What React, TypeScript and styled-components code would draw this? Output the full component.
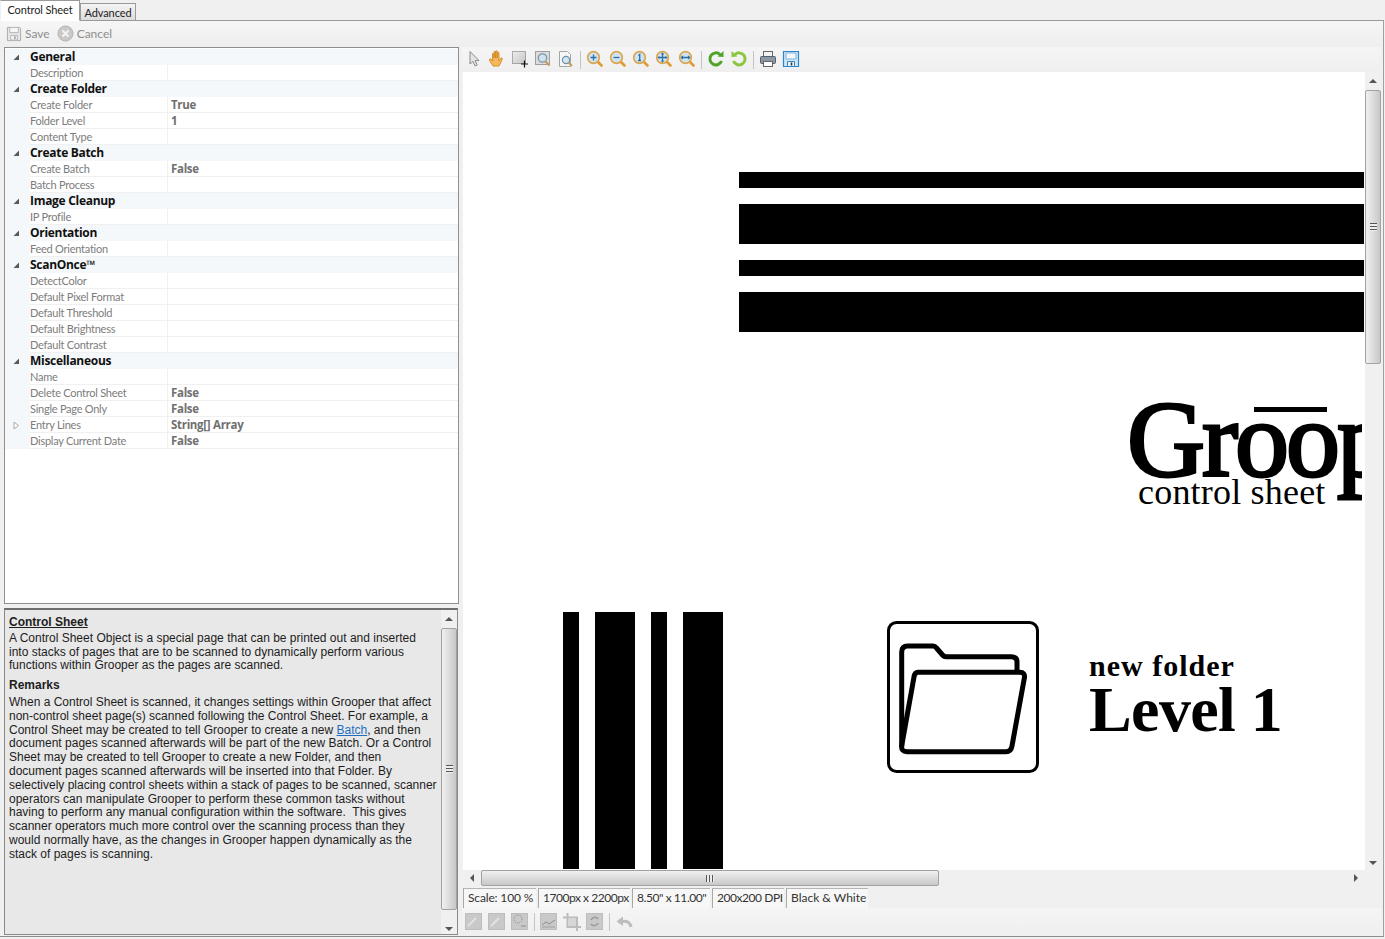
import React from "react";
import styled, { createGlobalStyle } from "styled-components";

const GlobalStyle = createGlobalStyle`
  html, body {
    margin: 0;
    padding: 0;
    background: #f0f0f0;
    overflow: hidden;
  }
  * {
    box-sizing: border-box;
  }
`;

const uiFont = `Lato, "Open Sans", "Liberation Sans", sans-serif`;
const boldFont = `"Open Sans", "Noto Sans", "Liberation Sans", sans-serif`;
const serif = `"Liberation Serif", "Times New Roman", serif`;

const Window = styled.div`
  width: 1385px;
  height: 939px;
  background: #f0f0f0;
  font-family: ${uiFont};
  font-size: 12px;
  display: flex;
  flex-direction: column;
`;

const TabStrip = styled.div`
  height: 21px;
  display: flex;
  align-items: flex-end;
  position: relative;
  z-index: 1;
  margin-bottom: -1px;
`;

const Tab = styled.div<{ $active?: boolean }>`
  height: ${(p) => (p.$active ? 21 : 18)}px;
  width: ${(p) => (p.$active ? 80 : 56)}px;
  border: 1px solid #9a9a9a;
  border-left-color: ${(p) => (p.$active ? "#f0f0f0" : "#9a9a9a")};
  border-bottom-color: ${(p) => (p.$active ? "#ffffff" : "#9a9a9a")};
  background: ${(p) =>
    p.$active ? "#ffffff" : "linear-gradient(#f4f4f4, #dcdcdc)"};
  color: #222;
  display: flex;
  align-items: center;
  justify-content: center;
  font-size: 11px;
  letter-spacing: -0.1px;
  padding-bottom: ${(p) => (p.$active ? 2 : 0)}px;
`;

const TabPanel = styled.div`
  height: 917px;
  width: 1384px;
  border-top: 1px solid #9a9a9a;
  border-right: 1px solid #a0a0a0;
  border-bottom: 1px solid #8c8c8c;
  display: flex;
  flex-direction: column;
`;

const ActionBar = styled.div`
  height: 26px;
  display: flex;
  align-items: center;
  gap: 7px;
  padding: 0 0 1px 6px;
  background: linear-gradient(#f6f6f6, #eeeeee);
  color: #8d8d8d;
  font-size: 12px;
`;

const ActionItem = styled.span`
  display: flex;
  align-items: center;
  gap: 3px;
`;

const Split = styled.div`
  flex: 1;
  display: flex;
  gap: 4px;
  padding-left: 4px;
  min-height: 0;
`;

const LeftColumn = styled.div`
  width: 455px;
  display: flex;
  flex-direction: column;
  gap: 4px;
`;

const PropertyGrid = styled.div`
  height: 557px;
  background: #ffffff;
  border: 1px solid #8f8f8f;
  padding-top: 1px;
`;

const GridRow = styled.div<{ $category?: boolean }>`
  height: 16px;
  display: grid;
  grid-template-columns: 25px 138px 1fr;
  grid-template-rows: 16px;
  background: ${(p) => (p.$category ? "#f5f8fa" : "#ffffff")};
  line-height: 15px;
  white-space: nowrap;
`;

const Gutter = styled.div`
  background: #f5f8fa;
  display: flex;
  align-items: center;
  justify-content: center;
  padding-right: 3px;
`;

const CategoryName = styled.div`
  grid-column: 2 / 4;
  font-family: ${boldFont};
  font-weight: 700;
  font-size: 12px;
  letter-spacing: -0.3px;
  color: #111;
`;

const PropName = styled.div`
  color: #7c7c7c;
  font-size: 11px;
  letter-spacing: -0.25px;
  padding-top: 1px;
  line-height: 14px;
  border-bottom: 1px solid #f0f0f0;
  border-right: 1px solid #f0f0f0;
`;

const PropValue = styled.div`
  font-family: ${boldFont};
  font-size: 11.5px;
  letter-spacing: -0.3px;
  color: #6f6f6f;
  font-weight: 700;
  padding-left: 3px;
  border-bottom: 1px solid #f0f0f0;
`;

const HelpPanel = styled.div`
  height: 327px;
  width: 454px;
  background: #e8e8e8;
  border: 1px solid #8a8a8a;
  border-top: 2px solid #6e6e6e;
  display: flex;
  font-family: "Liberation Sans", Arial, sans-serif;
  font-size: 12px;
  line-height: 13.8px;
  color: #1d1d1d;
`;

const HelpBody = styled.div`
  flex: 1;
  padding: 6px 0 0 4px;
  min-width: 0;
`;

const HelpTitle = styled.div`
  font-weight: 700;
  text-decoration: underline;
  margin-bottom: 2px;
`;

const HelpHeading = styled.div`
  font-weight: 700;
  margin: 6px 0 3px;
`;

const HelpText = styled.div`
  white-space: pre-wrap;
`;

const HelpLink = styled.span`
  color: #1f6fc0;
  text-decoration: underline;
`;

const RightColumn = styled.div`
  width: 918px;
  display: flex;
  flex-direction: column;
`;

const ToolRow = styled.div<{ $height: number; $top?: number }>`
  height: ${(p) => p.$height}px;
  display: flex;
  align-items: ${(p) => (p.$top ? "flex-start" : "center")};
  padding-top: ${(p) => p.$top || 0}px;
  margin-left: -1px;
  background: linear-gradient(#f5f5f5, #efefef);
`;

const ToolButton = styled.div`
  width: 23px;
  height: 22px;
  display: flex;
  align-items: center;
  justify-content: center;
`;

const ToolSeparator = styled.div`
  width: 6px;
  height: 18px;
  align-self: center;
  display: flex;
  justify-content: center;
  &::before {
    content: "";
    width: 1px;
    background: #c4c4c4;
  }
`;

const ViewerBody = styled.div`
  height: 798px;
  display: flex;
`;

const Canvas = styled.div`
  flex: 1;
  position: relative;
  background: #ffffff;
  overflow: hidden;
`;

const HorizontalBars = styled.div`
  position: absolute;
  left: 276px;
  top: 100px;
  width: 625px;
  display: flex;
  flex-direction: column;
  gap: 16px;
`;

const HBar = styled.div<{ $size: number }>`
  height: ${(p) => p.$size}px;
  background: #000;
`;

const VerticalBars = styled.div`
  position: absolute;
  left: 100px;
  top: 540px;
  height: 257px;
  display: flex;
  gap: 16px;
`;

const VBar = styled.div<{ $size: number }>`
  width: ${(p) => p.$size}px;
  background: #000;
`;

const Logo = styled.div`
  position: absolute;
  left: 661px;
  top: 310px;
  width: 238px;
  height: 130px;
  overflow: hidden;
  font-family: ${serif};
  color: #000;
`;

const LogoWord = styled.div`
  font-size: 108px;
  font-weight: 400;
  -webkit-text-stroke: 3px #000;
  line-height: 120px;
  letter-spacing: -3px;
  white-space: nowrap;
  position: absolute;
  left: 3px;
  top: -2px;
`;

const Macron = styled.span`
  position: relative;
  &::before {
    content: "";
    position: absolute;
    left: 19px;
    right: 10px;
    top: 27px;
    height: 5px;
    background: #000;
  }
`;

const LogoCaption = styled.div`
  position: absolute;
  left: 14px;
  top: 92px;
  font-size: 36px;
  line-height: 36px;
  letter-spacing: 0.2px;
  white-space: nowrap;
`;

const FolderMark = styled.svg`
  position: absolute;
  left: 424px;
  top: 549px;
  width: 152px;
  height: 152px;
`;

const LevelLabel = styled.div`
  position: absolute;
  left: 626px;
  top: 578px;
  font-family: ${serif};
  font-weight: 700;
  color: #000;
  white-space: nowrap;
`;

const LevelSmall = styled.div`
  font-size: 30px;
  line-height: 31px;
  letter-spacing: 1px;
`;

const LevelBig = styled.div`
  font-size: 64px;
  line-height: 58px;
  letter-spacing: -0.6px;
`;

const ScrollTrack = styled.div<{ $horizontal?: boolean }>`
  background: #f0f0f0;
  display: flex;
  flex-direction: ${(p) => (p.$horizontal ? "row" : "column")};
  align-items: center;
  flex: none;
  ${(p) => (p.$horizontal ? "height: 16px;" : "width: 16px;")}
`;

const ScrollThumb = styled.div<{ $horizontal?: boolean; $length: number }>`
  flex: none;
  display: flex;
  align-items: center;
  justify-content: center;
  border: 1px solid #a2a2a2;
  border-radius: 2px;
  ${(p) =>
    p.$horizontal
      ? `height: 16px; width: ${p.$length}px; background: linear-gradient(#f0f0f0, #dedede 45%, #c8c8c8);`
      : `width: 16px; height: ${p.$length}px; background: linear-gradient(90deg, #f0f0f0, #dedede 45%, #c8c8c8);`}
`;

const ScrollGrip = styled.div<{ $horizontal?: boolean }>`
  ${(p) =>
    p.$horizontal
      ? `width: 8px; height: 7px; background: repeating-linear-gradient(90deg, #555 0 1px, #eee 1px 3px);`
      : `height: 8px; width: 7px; background: repeating-linear-gradient(#555 0 1px, #eee 1px 3px);`}
`;

const ScrollArrow = styled.div<{ $dir: "up" | "down" | "left" | "right"; $offset: number }>`
  width: 0;
  height: 0;
  flex: none;
  border: 4px solid transparent;
  ${(p) =>
    ({
      up: "border-top: 0; border-bottom-color: #555;",
      down: "border-bottom: 0; border-top-color: #555;",
      left: "border-left: 0; border-right-color: #555;",
      right: "border-right: 0; border-left-color: #555;",
    })[p.$dir]}
  margin: ${(p) =>
    p.$dir === "up" || p.$dir === "down"
      ? `${p.$offset}px 0`
      : `0 ${p.$offset}px`};
`;

const ScrollSpacer = styled.div`
  flex: 1;
`;

const StatusBar = styled.div`
  height: 20px;
  margin-top: 2px;
  display: flex;
  gap: 2px;
  font-size: 12px;
  color: #333;
`;

const StatusCell = styled.div<{ $width: number; $squeeze: number }>`
  width: ${(p) => p.$width}px;
  letter-spacing: ${(p) => p.$squeeze}px;
  border-top: 1px solid #b5b5b5;
  border-left: 1px solid #a8a8a8;
  background: #f7f7f7;
  padding-left: 4px;
  line-height: 18px;
  white-space: nowrap;
`;

const ArrowGlyph = styled.svg`
  display: block;
`;

const Tri = ({ open }: { open: boolean }) =>
  open ? (
    <ArrowGlyph width="8" height="8" viewBox="0 0 8 8">
      <path d="M7 1.5V7H1.5z" fill="#5a5a5a" />
    </ArrowGlyph>
  ) : (
    <ArrowGlyph width="8" height="9" viewBox="0 0 8 9">
      <path d="M2 1l4.5 3.5L2 8z" fill="#fff" stroke="#a8a8a8" />
    </ArrowGlyph>
  );

const SaveIcon = () => (
  <svg width="16" height="16" viewBox="0 0 17 17">
    <path d="M1.5 1.5h13l1 1v13h-14z" fill="#e6e6e6" stroke="#a9a9a9" />
    <path d="M4 2v5h9V2" fill="#f6f6f6" stroke="#b5b5b5" />
    <path d="M5 10h7v5H5z" fill="#f2f2f2" stroke="#b5b5b5" />
    <path d="M9.5 11v3" stroke="#999" strokeWidth="1.5" />
  </svg>
);

const CancelIcon = () => (
  <svg width="17" height="17" viewBox="0 0 17 17">
    <circle cx="8.5" cy="8.5" r="7.5" fill="#c9c9c9" stroke="#b3b3b3" />
    <path d="M5.5 5.5l6 6M11.5 5.5l-6 6" stroke="#f4f4f4" strokeWidth="2" />
  </svg>
);

const CursorIcon = () => (
  <svg width="18" height="18" viewBox="0 0 18 18">
    <path d="M5 1.5v12.5l3-2.6 2 4.6 2.2-1-2-4.4H14z" fill="#e4e4e4" stroke="#8b8b8b" />
  </svg>
);

const HandIcon = () => (
  <svg width="18" height="18" viewBox="0 0 18 18">
    <path
      d="M5 16c-1-2-3-4-3.500-6-.3-1.200 1-1.500 1.700-.7L4.500 11V4c0-1 1.500-1 1.500 0v4-6c0-1 1.700-1 1.700 0v6-6.500c0-1 1.700-1 1.700 0V8V3c0-1 1.600-1 1.600 0v8c.7-1 1.200-2.500 2-3 .8-.4 1.500.3 1.200 1-1 2-1.700 5-3.200 7z"
      fill="#f5b65c"
      stroke="#d08a25"
      strokeWidth="0.9"
    />
  </svg>
);

const SelectIcon = () => (
  <svg width="18" height="18" viewBox="0 0 18 18">
    <defs>
      <linearGradient id="selectFill" x1="0" y1="0" x2="1" y2="1">
        <stop offset="0" stopColor="#eeeeee" />
        <stop offset="1" stopColor="#c4c4c4" />
      </linearGradient>
    </defs>
    <rect x="1.500" y="1.500" width="13" height="12" fill="url(#selectFill)" stroke="#666" strokeDasharray="1 1" />
    <path d="M13.500 10.500v7M10 14h7" stroke="#111" strokeWidth="1.200" />
  </svg>
);

const ZoomSelectIcon = () => (
  <svg width="18" height="18" viewBox="0 0 18 18">
    <rect x="1.500" y="1.500" width="14" height="13" fill="#dcdcdc" stroke="#555" strokeDasharray="1 1" />
    <circle cx="8.500" cy="8" r="4.200" fill="#cfe2ee" stroke="#7b97aa" strokeWidth="1.300" />
    <path d="M11.500 11.500l4 4" stroke="#c99a56" strokeWidth="2" />
  </svg>
);

const PageZoomIcon = () => (
  <svg width="18" height="18" viewBox="0 0 18 18">
    <path d="M2.500 1.500h8l3 3v12h-11z" fill="#f7f7f7" stroke="#a5a5a5" />
    <circle cx="9" cy="10" r="3.600" fill="#d3e6f2" stroke="#6c92ab" strokeWidth="1.200" />
    <path d="M11.500 12.500l3.500 3.500" stroke="#c99a56" strokeWidth="2" />
  </svg>
);

const MagnifierIcon = ({ glyph }: { glyph: string }) => (
  <svg width="18" height="18" viewBox="0 0 18 18">
    <path d="M11.500 11.500l4 4" stroke="#e09a33" strokeWidth="2.600" strokeLinecap="round" />
    <circle cx="7.500" cy="7.500" r="5.800" fill="#cfe4f3" stroke="#dba64e" strokeWidth="1.700" />
    <path d={glyph} stroke="#2c6ea8" strokeWidth="1.300" fill="none" />
  </svg>
);

const RotateIcon = ({ flip }: { flip?: boolean }) => (
  <svg width="18" height="18" viewBox="0 0 18 18">
    <g transform={flip ? "translate(18 0) scale(-1 1)" : undefined}>
      <path
        d="M14.500 11a6 6 0 1 1-1.500-6.500"
        fill="none"
        stroke={flip ? "#8cc63f" : "#4fa32a"}
        strokeWidth="3"
      />
      <path d="M10.500 6.500L16.500 7V1z" fill={flip ? "#8cc63f" : "#4fa32a"} />
    </g>
  </svg>
);

const PrintIcon = () => (
  <svg width="18" height="18" viewBox="0 0 18 18">
    <rect x="4.500" y="1.500" width="9" height="5" fill="#f2f2f2" stroke="#666" />
    <rect x="1.500" y="6.500" width="15" height="7" rx="1" fill="#8b97a3" stroke="#56616c" />
    <rect x="4.500" y="11.500" width="9" height="5" fill="#fff" stroke="#666" />
  </svg>
);

const DiskIcon = () => (
  <svg width="18" height="18" viewBox="0 0 18 18">
    <path d="M1.500 1.500h15v15h-15z" fill="#cfe6f7" stroke="#2f85c9" strokeWidth="1.200" />
    <path d="M4 3h10v6H4z" fill="#f4f8fb" stroke="#7fb3da" />
    <path d="M5.500 11.500h7v5h-7z" fill="#eef4f8" stroke="#2f85c9" />
    <path d="M9.500 12.500v3" stroke="#333" strokeWidth="1.600" />
  </svg>
);

const MutedSquare = ({ children }: { children?: React.ReactNode }) => (
  <svg width="17" height="17" viewBox="0 0 17 17">
    <rect x="0.500" y="0.500" width="16" height="16" fill="#c9c9c9" stroke="#bdbdbd" />
    {children}
  </svg>
);

const CropIcon = () => (
  <svg width="18" height="18" viewBox="0 0 18 18">
    <path d="M4.500 0v14H18M0 4.500h14V18" fill="none" stroke="#bcbcbc" strokeWidth="2" />
    <rect x="6" y="6" width="7" height="7" fill="#d6d6d6" />
  </svg>
);

const UndoIcon = () => (
  <svg width="18" height="18" viewBox="0 0 18 18">
    <path d="M16 14c-1-5-5-7-10-5" fill="none" stroke="#bdbdbd" strokeWidth="3" />
    <path d="M8 3.500L1.500 8.500 8 13z" fill="#bdbdbd" />
  </svg>
);

const ScrollBarVertical = ({ before, thumb, after }: { before: number; thumb: number; after: number }) => (
  <ScrollTrack>
    <ScrollArrow $dir="up" $offset={before} />
    <ScrollThumb $length={thumb}>
      <ScrollGrip />
    </ScrollThumb>
    <ScrollSpacer />
    <ScrollArrow $dir="down" $offset={after} />
  </ScrollTrack>
);

const categories: { name: string; rows: [string, string?][] }[] = [
  { name: "General", rows: [["Description"]] },
  {
    name: "Create Folder",
    rows: [["Create Folder", "True"], ["Folder Level", "1"], ["Content Type"]],
  },
  { name: "Create Batch", rows: [["Create Batch", "False"], ["Batch Process"]] },
  { name: "Image Cleanup", rows: [["IP Profile"]] },
  { name: "Orientation", rows: [["Feed Orientation"]] },
  {
    name: "ScanOnce™",
    rows: [
      ["DetectColor"],
      ["Default Pixel Format"],
      ["Default Threshold"],
      ["Default Brightness"],
      ["Default Contrast"],
    ],
  },
  {
    name: "Miscellaneous",
    rows: [
      ["Name"],
      ["Delete Control Sheet", "False"],
      ["Single Page Only", "False"],
      ["Entry Lines", "String[] Array"],
      ["Display Current Date", "False"],
    ],
  },
];

const statusCells: [string, number, number][] = [
  ["Scale: 100 %", 73, -0.15],
  ["1700px x 2200px", 92, -0.47],
  ['8.50" x 11.00"', 78, -0.43],
  ["200x200 DPI", 72, -0.45],
  ["Black & White", 82, 0],
];

const App = () => (
  <Window>
    <GlobalStyle />
    <TabStrip>
      <Tab $active>Control Sheet</Tab>
      <Tab>Advanced</Tab>
    </TabStrip>
    <TabPanel>
      <ActionBar>
        <ActionItem>
          <SaveIcon />
          Save
        </ActionItem>
        <ActionItem>
          <CancelIcon />
          Cancel
        </ActionItem>
      </ActionBar>
      <Split>
        <LeftColumn>
          <PropertyGrid>
            {categories.map((category) => (
              <React.Fragment key={category.name}>
                <GridRow $category>
                  <Gutter>
                    <Tri open />
                  </Gutter>
                  <CategoryName>{category.name}</CategoryName>
                </GridRow>
                {category.rows.map(([name, value]) => (
                  <GridRow key={name}>
                    <Gutter>{name === "Entry Lines" && <Tri open={false} />}</Gutter>
                    <PropName>{name}</PropName>
                    <PropValue>{value}</PropValue>
                  </GridRow>
                ))}
              </React.Fragment>
            ))}
          </PropertyGrid>
          <HelpPanel>
            <HelpBody>
              <HelpTitle>Control Sheet</HelpTitle>
              <HelpText>
                {`A Control Sheet Object is a special page that can be printed out and inserted
into stacks of pages that are to be scanned to dynamically perform various
functions within Grooper as the pages are scanned.`}
              </HelpText>
              <HelpHeading>Remarks</HelpHeading>
              <HelpText>
                {`When a Control Sheet is scanned, it changes settings within Grooper that affect
non-control sheet page(s) scanned following the Control Sheet. For example, a
Control Sheet may be created to tell Grooper to create a new `}
                <HelpLink>Batch</HelpLink>
                {`, and then
document pages scanned afterwards will be part of the new Batch. Or a Control
Sheet may be created to tell Grooper to create a new Folder, and then
document pages scanned afterwards will be inserted into that Folder. By
selectively placing control sheets within a stack of pages to be scanned, scanner
operators can manipulate Grooper to perform these common tasks without
having to perform any manual configuration within the software.  This gives
scanner operators much more control over the scanning process than they
would normally have, as the changes in Grooper happen dynamically as the
stack of pages is scanning.`}
              </HelpText>
            </HelpBody>
            <ScrollBarVertical before={7} thumb={282} after={3} />
          </HelpPanel>
        </LeftColumn>
        <RightColumn>
          <ToolRow $height={25} $top={1}>
            <ToolButton><CursorIcon /></ToolButton>
            <ToolButton><HandIcon /></ToolButton>
            <ToolButton><SelectIcon /></ToolButton>
            <ToolButton><ZoomSelectIcon /></ToolButton>
            <ToolButton><PageZoomIcon /></ToolButton>
            <ToolSeparator />
            <ToolButton><MagnifierIcon glyph="M4.500 7.500h6M7.500 4.500v6" /></ToolButton>
            <ToolButton><MagnifierIcon glyph="M4.500 7.500h6" /></ToolButton>
            <ToolButton><MagnifierIcon glyph="M6.500 5.500l1.200-1v6M6 10.500h3" /></ToolButton>
            <ToolButton><MagnifierIcon glyph="M7.500 3.500v8M3.500 7.500h8M6.500 4.500l1-1 1 1M6.500 10.500l1 1 1-1M4.500 6.500l-1 1 1 1M10.500 6.500l1 1-1 1" /></ToolButton>
            <ToolButton><MagnifierIcon glyph="M3.500 7.500h8M4.800 6l-1.300 1.500L4.800 9M10.200 6l1.300 1.500L10.200 9" /></ToolButton>
            <ToolSeparator />
            <ToolButton><RotateIcon /></ToolButton>
            <ToolButton><RotateIcon flip /></ToolButton>
            <ToolSeparator />
            <ToolButton><PrintIcon /></ToolButton>
            <ToolButton><DiskIcon /></ToolButton>
          </ToolRow>
          <ViewerBody>
            <Canvas>
              <HorizontalBars>
                <HBar $size={16} />
                <HBar $size={40} />
                <HBar $size={16} />
                <HBar $size={40} />
              </HorizontalBars>
              <Logo>
                <LogoWord>
                  Gr<Macron>oo</Macron>per
                </LogoWord>
                <LogoCaption>control sheet</LogoCaption>
              </Logo>
              <VerticalBars>
                <VBar $size={16} />
                <VBar $size={40} />
                <VBar $size={16} />
                <VBar $size={40} />
              </VerticalBars>
              <FolderMark viewBox="0 0 152 152" fill="none" stroke="#000">
                <rect x="1.500" y="1.500" width="149" height="149" rx="8" strokeWidth="3" />
                <path
                  d="M14.700 125.700V31q0-6 6-6H46q2 0 3.500 2l6 7q1.500 1.700 3.500 1.700h65q6 0 6 5V51"
                  strokeWidth="5"
                  strokeLinejoin="round"
                />
                <path
                  d="M31 51.300H133q5 0 4.500 5L125 125q-1 5.700-6 5.700H20q-6 0-5.300-6L27 56q.7-4.700 4-4.700z"
                  strokeWidth="5"
                  strokeLinejoin="round"
                />
              </FolderMark>
              <LevelLabel>
                <LevelSmall>new folder</LevelSmall>
                <LevelBig>Level 1</LevelBig>
              </LevelLabel>
            </Canvas>
            <ScrollBarVertical before={7} thumb={274} after={5} />
          </ViewerBody>
          <ScrollTrack $horizontal>
            <ScrollArrow $dir="left" $offset={7} />
            <ScrollThumb $horizontal $length={458}>
              <ScrollGrip $horizontal />
            </ScrollThumb>
            <ScrollSpacer />
            <ScrollArrow $dir="right" $offset={23} />
          </ScrollTrack>
          <StatusBar>
            {statusCells.map(([label, width, squeeze]) => (
              <StatusCell key={label} $width={width} $squeeze={squeeze}>
                {label}
              </StatusCell>
            ))}
          </StatusBar>
          <ToolRow $height={27}>
            <ToolButton><MutedSquare><path d="M3 13l8-8" stroke="#e2e2e2" strokeWidth="2" /></MutedSquare></ToolButton>
            <ToolButton><MutedSquare><path d="M3 13l8-8" stroke="#e2e2e2" strokeWidth="2" /></MutedSquare></ToolButton>
            <ToolButton><MutedSquare><circle cx="7" cy="6" r="4" fill="none" stroke="#8e8e8e" strokeDasharray="1 1" /><path d="M10 13h5" stroke="#8e8e8e" /></MutedSquare></ToolButton>
            <ToolSeparator />
            <ToolButton><MutedSquare><path d="M2 12l4-3 3 2 6-4" fill="none" stroke="#8e8e8e" /><path d="M2 14h13" stroke="#a0a0a0" /></MutedSquare></ToolButton>
            <ToolButton><CropIcon /></ToolButton>
            <ToolButton><MutedSquare><path d="M12 6a4 4 0 0 0-7 1M5 11a4 4 0 0 0 7-1" fill="none" stroke="#9a9a9a" strokeWidth="1.500" /></MutedSquare></ToolButton>
            <ToolSeparator />
            <ToolButton><UndoIcon /></ToolButton>
          </ToolRow>
        </RightColumn>
      </Split>
    </TabPanel>
  </Window>
);

export default App;
